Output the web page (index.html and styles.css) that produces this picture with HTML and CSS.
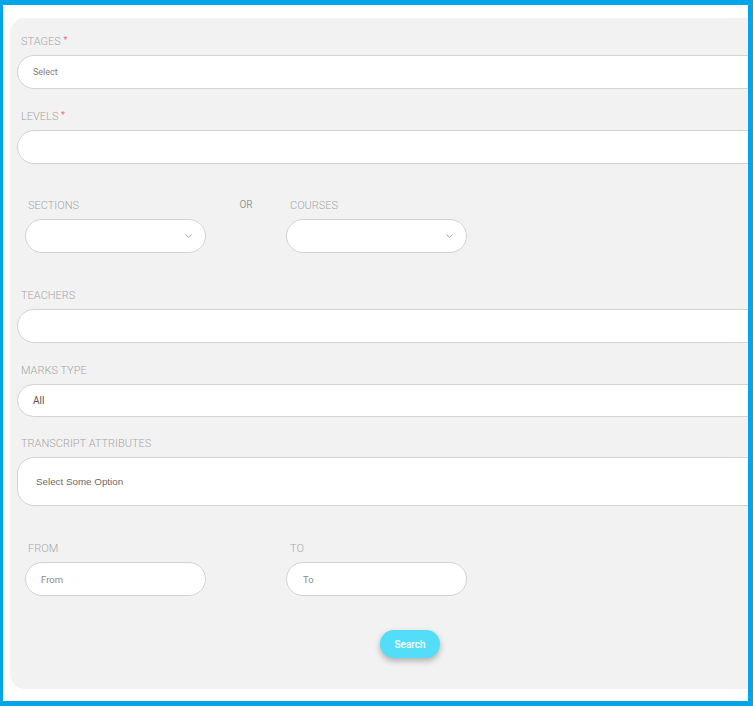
FILE: index.html
```html
<!DOCTYPE html>
<html>
<head>
<meta charset="utf-8">
<link rel="stylesheet" href="styles.css">
</head>
<body>
<div class="frame">
  <div class="panel">
    <div class="group">
      <div class="label">STAGES <span class="req">*</span></div>
      <div class="input"><span class="ph ph-select">Select</span></div>
    </div>
    <div class="group">
      <div class="label">LEVELS <span class="req">*</span></div>
      <div class="input"></div>
    </div>
    <div class="row row-top">
      <div class="col">
        <div class="label label-inner">SECTIONS</div>
        <div class="input input-sm">
          <svg class="chev" width="7" height="4" viewBox="0 0 7 4"><polyline points="0.5,0.5 3.5,3.3 6.5,0.5" fill="none" stroke="#9a9a9a" stroke-width="0.9"/></svg>
        </div>
      </div>
      <div class="or">OR</div>
      <div class="col">
        <div class="label label-inner label-right">COURSES</div>
        <div class="input input-sm">
          <svg class="chev" width="7" height="4" viewBox="0 0 7 4"><polyline points="0.5,0.5 3.5,3.3 6.5,0.5" fill="none" stroke="#9a9a9a" stroke-width="0.9"/></svg>
        </div>
      </div>
    </div>
    <div class="group">
      <div class="label">TEACHERS</div>
      <div class="input"></div>
    </div>
    <div class="group group-marks">
      <div class="label">MARKS TYPE</div>
      <div class="input input-marks"><span class="val">All</span></div>
    </div>
    <div class="group">
      <div class="label">TRANSCRIPT ATTRIBUTES</div>
      <div class="input input-multi"><span class="ph ph-multi">Select Some Option</span></div>
    </div>
    <div class="row row-dates">
      <div class="col">
        <div class="label label-inner">FROM</div>
        <div class="input input-sm"><span class="ph ph-date">From</span></div>
      </div>
      <div class="spacer"></div>
      <div class="col">
        <div class="label label-inner label-right">TO</div>
        <div class="input input-sm"><span class="ph ph-date ph-to">To</span></div>
      </div>
    </div>
    <div class="actions">
      <button class="btn">Search</button>
    </div>
  </div>
</div>
</body>
</html>
```
FILE: styles.css
```css
* { box-sizing: border-box; }
html, body { margin: 0; padding: 0; background: #ffffff; }
body { font-family: Roboto, "Liberation Sans", Arial, sans-serif; }

.frame {
  width: 753px;
  height: 706px;
  border-style: solid;
  border-color: #02a5e8;
  border-width: 5px 5px 5px 3px;
  background: #ffffff;
  overflow: hidden;
  padding: 13px 0 0 7px;
}

.panel {
  width: 1000px;
  background: #f2f2f2;
  border-radius: 15px;
  padding: 17px 0 31px 7px;
}

.group { margin-bottom: 21px; }
.group-marks { margin-bottom: 20px; }

.label {
  font-size: 11px;
  line-height: 13px;
  height: 13px;
  font-weight: 300;
  color: #a6a6a6;
  padding-left: 4px;
  margin-bottom: 7px;
  white-space: nowrap;
}
.label-inner { padding-left: 3px; }
.label-right { padding-left: 4px; }
.req { color: #f36b6b; font-size: 9px; font-weight: 400; position: relative; top: -2px; }

.input {
  height: 34px;
  background: #ffffff;
  border: 1px solid #d3d3d3;
  border-radius: 17px;
  display: flex;
  align-items: center;
  position: relative;
}
.input-marks { height: 33px; }
.input-multi { height: 49px; border-radius: 17px; }

.ph, .val { white-space: nowrap; }
.ph-select { font-size: 9px; color: #7d7d7d; padding-left: 15px; }
.val { font-size: 10px; color: #555555; padding-left: 15px; }
.ph-multi { font-size: 9.8px; color: #6a6a6a; padding-left: 18px; font-family: "Liberation Sans", Arial, sans-serif; }
.ph-date { font-size: 9.5px; color: #8a8a8a; padding-left: 15px; }
.ph-to { padding-left: 16px; }

.row { display: flex; align-items: flex-start; margin-left: 8px; }
.row-top { margin-top: 35px; margin-bottom: 36px; }
.row-dates { margin-top: 36px; margin-bottom: 34px; }
.col { width: 181px; }
.input-sm { width: 181px; }

.or {
  width: 80px;
  text-align: center;
  font-size: 10px;
  line-height: 13px;
  font-weight: 400;
  color: #9a9a9a;
  margin-top: -1px;
}
.spacer { width: 80px; }

.chev { position: absolute; right: 13px; top: 14px; }

.actions { padding-left: 363px; }
.btn {
  width: 60px;
  height: 28px;
  border: none;
  border-radius: 14px;
  background: #53ddf8;
  color: #ffffff;
  font-family: Roboto, "Liberation Sans", Arial, sans-serif;
  font-size: 10px;
  font-weight: 500;
  padding: 0;
  box-shadow: 0 3px 6px rgba(0, 0, 0, 0.28);
  display: block;
}
```
